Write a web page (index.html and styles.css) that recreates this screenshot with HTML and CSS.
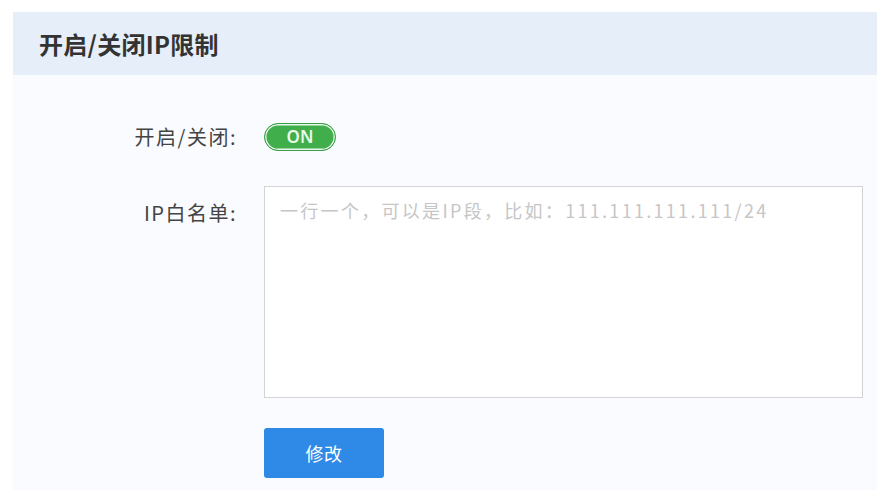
FILE: index.html
```html
<!DOCTYPE html>
<html lang="zh-CN">
<head>
<meta charset="utf-8">
<title>开启/关闭IP限制</title>
<link rel="stylesheet" href="styles.css">
</head>
<body>
<div class="panel">
  <div class="panel-header">
    <h2 class="panel-title">开启/关闭IP限制</h2>
  </div>
  <div class="panel-body">
    <div class="form-row">
      <label class="form-label">开启/关闭:</label>
      <div class="form-control">
        <span class="switch"><span class="switch-text">ON</span></span>
      </div>
    </div>
    <div class="form-row form-row-top">
      <label class="form-label form-label-top" for="whitelist">IP白名单:</label>
      <div class="form-control">
        <textarea id="whitelist" class="textarea" placeholder="一行一个，可以是IP段，比如：111.111.111.111/24"></textarea>
      </div>
    </div>
    <div class="form-row form-row-btn">
      <span class="form-label"></span>
      <div class="form-control">
        <button class="btn-primary" type="button">修改</button>
      </div>
    </div>
  </div>
</div>
</body>
</html>
```
FILE: styles.css
```css
html, body {
  margin: 0;
  padding: 0;
  background: #ffffff;
}
body {
  font-family: "Noto Sans CJK SC", "Noto Sans", sans-serif;
  color: #333;
}
.panel {
  margin: 12px 7px 0 13px;
  width: 864px;
  background: #f9fbfe;
}
.panel-header {
  height: 63px;
  background: #e6eefa;
  display: flex;
  align-items: center;
  padding-left: 26px;
}
.panel-title {
  margin: 0;
  font-size: 24px;
  font-weight: 700;
  letter-spacing: 0.3px;
  color: #333;
}
.panel-body {
  padding: 47px 0 12px 0;
  display: flex;
  flex-direction: column;
  gap: 35px;
}
.form-row {
  display: grid;
  grid-template-columns: 224px 1fr;
  column-gap: 27px;
  align-items: center;
}
.form-row-top {
  align-items: start;
}
.form-row-btn {
  margin-top: -5px;
}
.form-label {
  text-align: right;
  font-size: 20px;
  letter-spacing: 1.5px;
  color: #444;
  line-height: 29px;
}
.form-label-top {
  padding-top: 12px;
}
.form-control {
  display: flex;
}
.switch {
  box-sizing: border-box;
  width: 72px;
  height: 28px;
  border-radius: 14px;
  background: #3fae4b;
  border: 1px solid #3a9f45;
  box-shadow: inset 0 0 0 1.5px #e8f5ea;
  display: flex;
  align-items: center;
  justify-content: center;
}
.switch-text {
  color: #eafbe9;
  font-family: "Noto Sans", sans-serif;
  font-weight: 600;
  font-size: 17px;
  line-height: 1;
}
.textarea {
  box-sizing: border-box;
  width: 599px;
  height: 212px;
  margin: 0;
  padding: 10px 15px;
  border: 1px solid #d4d4d4;
  background: #ffffff;
  font-family: "Noto Sans CJK SC", "Noto Sans", sans-serif;
  font-size: 18px;
  letter-spacing: 2.3px;
  line-height: 26px;
  resize: none;
  outline: none;
}
.textarea::placeholder {
  color: #c6c6c6;
}
.btn-primary {
  width: 120px;
  height: 50px;
  border: none;
  border-radius: 3px;
  background: #2e8ae6;
  color: #ffffff;
  font-family: "Noto Sans CJK SC", sans-serif;
  font-size: 18px;
  letter-spacing: 0.5px;
  padding: 0;
}
```
